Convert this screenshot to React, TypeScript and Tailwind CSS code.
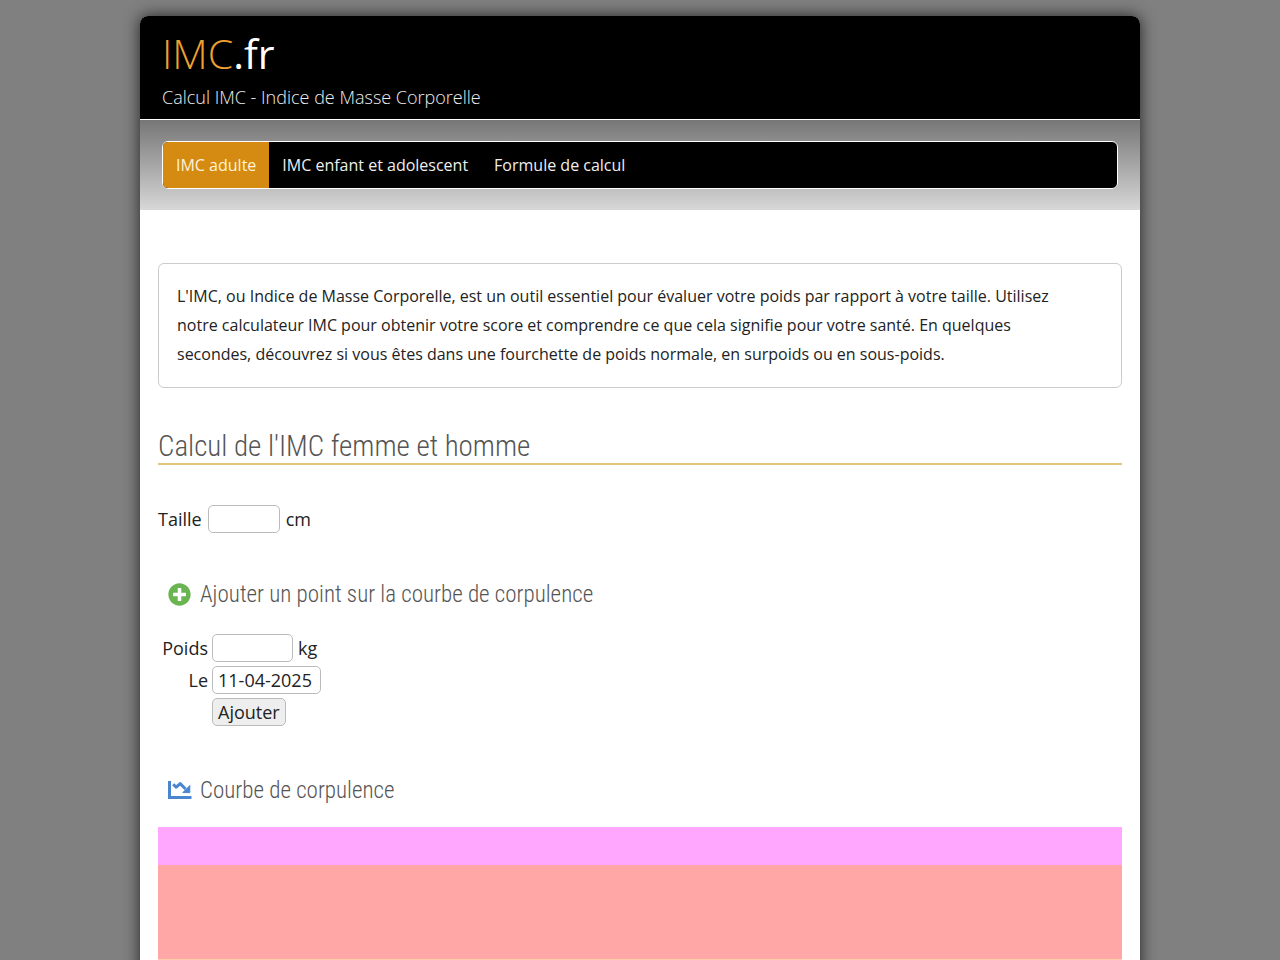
import { useState } from 'react'
import type { ReactNode } from 'react'
import { FaPlusCircle } from 'react-icons/fa'

const NAV_ITEMS = [
  { label: 'IMC adulte', href: '#adulte', active: true },
  { label: 'IMC enfant et adolescent', href: '#enfant', active: false },
  { label: 'Formule de calcul', href: '#formule', active: false },
]

// BMI zones, from the heaviest down
const ZONES = [
  { id: 'morbid', className: 'h-[38px] bg-[#ffa6ff]' },
  { id: 'obese', className: 'h-[94px] bg-[#ffa6a6]' },
  { id: 'overweight', className: 'h-[94px] bg-[#ffcfa6]' },
  { id: 'normal', className: 'h-[94px] bg-[#a6ffa6]' },
]

const fieldClass =
  'h-7 rounded-[5px] border border-[#bbb] bg-white px-[5px] text-lg leading-6 text-[#222] outline-none'

function ChartIcon() {
  return (
    <svg viewBox="0 0 24 20" className="h-5 w-6" fill="none" aria-hidden="true">
      <path d="M1.5 1V17.5H23.5" stroke="#4a86cf" strokeWidth="3" />
      <path
        d="M5.2 4.2L8.2 7.2L12.2 3.6L17.5 9"
        stroke="#4a86cf"
        strokeWidth="3"
        strokeLinejoin="round"
      />
      <path d="M21.8 5.6V12.6H14.8Z" fill="#4a86cf" stroke="#4a86cf" strokeLinejoin="round" />
    </svg>
  )
}

function SectionTitle({ icon, children }: { icon: ReactNode; children: ReactNode }) {
  return (
    <h3 className="flex items-center gap-2 pl-[10px] font-['Roboto_Condensed',Roboto,sans-serif] text-[23px] leading-8 font-light text-[#555]">
      <span className="w-6 pb-[2px]">{icon}</span>
      {children}
    </h3>
  )
}

export default function App() {
  const [height, setHeight] = useState('')
  const [weight, setWeight] = useState('')
  const [date, setDate] = useState('11-04-2025')

  return (
    <div className="min-h-screen bg-[#808080] pt-4 font-['Open_Sans',sans-serif] text-lg text-[#222]">
      <div className="mx-auto max-w-[1000px] rounded-t-lg bg-white shadow-[0_0_16px_#222]">
        <header className="rounded-t-lg border-b border-white bg-black px-[22px] pt-3 pb-2">
          <p className="text-[41px] leading-[50px] text-white">
            <span className="font-light text-[#f0a030]">IMC</span>.fr
          </p>
          <h1 className="mt-[6px] text-lg leading-[27px] font-light text-[#eee]">
            Calcul IMC - Indice de Masse Corporelle
          </h1>
        </header>

        <div className="bg-linear-to-b from-[#777] to-[#d8d8d8] px-[22px] py-[21px]">
          <nav className="flex overflow-hidden rounded-md border border-white bg-black text-base leading-[46px]">
            {NAV_ITEMS.map((item) => (
              <a
                key={item.label}
                href={item.href}
                className={item.active ? 'bg-[#d58a12] px-[13px] text-[#fff3d6]' : 'px-[13px] text-[#eee]'}
              >
                {item.label}
              </a>
            ))}
          </nav>
        </div>

        <main className="px-[18px] pt-[53px]">
          <p className="rounded-md border border-[#ccc] py-[18px] pr-12 pl-[18px] text-base leading-[29px]">
            L'IMC, ou Indice de Masse Corporelle, est un outil essentiel pour évaluer votre poids par
            rapport à votre taille. Utilisez notre calculateur IMC pour obtenir votre score et
            comprendre ce que cela signifie pour votre santé. En quelques secondes, découvrez si vous
            êtes dans une fourchette de poids normale, en surpoids ou en sous-poids.
          </p>

          <h2 className="mt-[42px] border-b-2 border-[#e2c67f] font-['Roboto_Condensed',Roboto,sans-serif] text-[29px] leading-[33px] font-light text-[#555]">
            Calcul de l'IMC femme et homme
          </h2>

          <div className="mt-10 flex items-center gap-[6px]">
            <label htmlFor="height">Taille</label>
            <input
              id="height"
              className={`${fieldClass} w-[72px]`}
              value={height}
              onChange={(e) => setHeight(e.target.value)}
            />
            <span>cm</span>
          </div>

          <div className="mt-[46px]">
            <SectionTitle icon={<FaPlusCircle className="size-[23px] text-[#6ab551]" />}>
              Ajouter un point sur la courbe de corpulence
            </SectionTitle>
          </div>

          <form
            className="mt-[23px] grid grid-cols-[50px_1fr] items-center gap-1"
            onSubmit={(e) => e.preventDefault()}
          >
            <label htmlFor="weight" className="text-right">
              Poids
            </label>
            <div className="flex items-center gap-[5px]">
              <input
                id="weight"
                className={`${fieldClass} w-[81px]`}
                value={weight}
                onChange={(e) => setWeight(e.target.value)}
              />
              <span>kg</span>
            </div>
            <label htmlFor="date" className="text-right">
              Le
            </label>
            <input
              id="date"
              className={`${fieldClass} w-[109px]`}
              value={date}
              onChange={(e) => setDate(e.target.value)}
            />
            <button
              type="submit"
              className="col-start-2 h-7 justify-self-start rounded-[5px] border border-[#bbb] bg-[#eee] px-[5px] leading-6"
            >
              Ajouter
            </button>
          </form>

          <div className="mt-[49px]">
            <SectionTitle icon={<ChartIcon />}>Courbe de corpulence</SectionTitle>
          </div>

          <div className="mt-5">
            {ZONES.map((zone) => (
              <div key={zone.id} className={zone.className} />
            ))}
          </div>
        </main>
      </div>
    </div>
  )
}
